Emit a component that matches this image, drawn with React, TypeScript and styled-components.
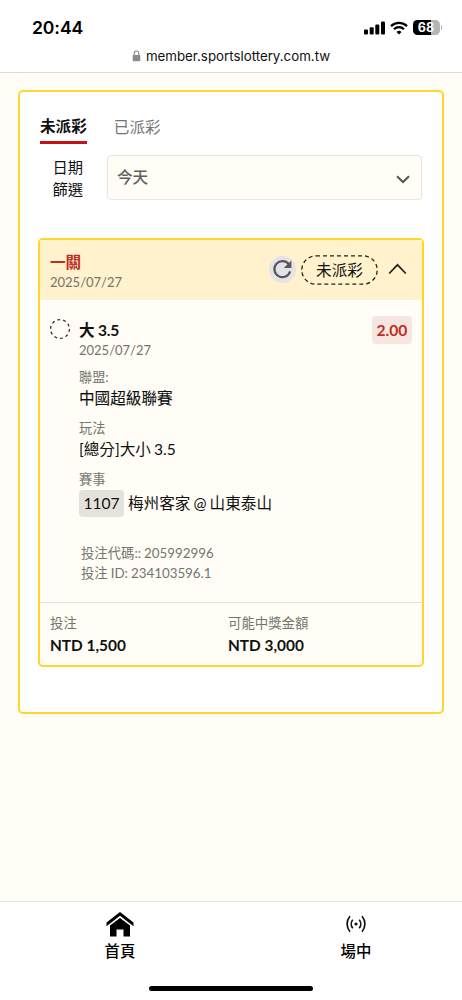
import React from "react";
import styled, { createGlobalStyle } from "styled-components";

const GlobalStyle = createGlobalStyle`
  * { box-sizing: border-box; }
  body {
    margin: 0;
    background: #fffdf6;
    color: #111;
    font-family: Lato, "Noto Sans CJK TC", sans-serif;
  }
`;

const Page = styled.div`
  display: flex;
  flex-direction: column;
  height: 1000px;
  width: 462px;
  overflow: hidden;
`;

const BrowserBar = styled.header`
  display: flex;
  flex-direction: column;
  height: 73px;
  background: #fff;
  border-bottom: 1px solid #dadadc;
  font-family: Inter, sans-serif;
`;

const StatusRow = styled.div`
  display: flex;
  justify-content: space-between;
  align-items: center;
  height: 27px;
  margin-top: 14px;
  padding: 0 20px 0 32px;
`;

const Clock = styled.span`
  font-size: 17.6px;
  font-weight: 600;
  line-height: 26px;
  letter-spacing: -0.1px;
  color: #000;
`;

const StatusIcons = styled.div`
  display: flex;
  align-items: center;
  gap: 5px;
`;

const Battery = styled.div`
  display: flex;
  align-items: center;
  gap: 1px;
`;

const BatteryLevel = styled.span`
  width: 27px;
  height: 15px;
  border-radius: 4.5px;
  background: linear-gradient(90deg, #000 68%, #b5b5b5 68%);
  color: #fff;
  font-size: 12.5px;
  font-weight: 700;
  line-height: 15px;
  text-align: center;
`;

const BatteryTip = styled.span`
  width: 1.5px;
  height: 5px;
  border-radius: 0 2px 2px 0;
  background: #b5b5b5;
`;

const AddressRow = styled.div`
  display: flex;
  justify-content: center;
  align-items: center;
  gap: 5px;
  height: 30px;
  font-size: 13.3px;
  color: #111;
`;

const Main = styled.main`
  flex: 1;
  padding: 17px 18px 0;
`;

const Panel = styled.section`
  height: 624px;
  padding: 20px 18px 0;
  border: 2px solid #ffd62c;
  border-radius: 5px;
  background: #fff;
`;

const Tabs = styled.nav`
  display: flex;
  gap: 27px;
  height: 33px;
  padding-left: 2px;
`;

const Tab = styled.span<{ $active?: boolean }>`
  height: 32px;
  border-bottom: 3px solid ${(p) => (p.$active ? "#c11318" : "transparent")};
  font-size: 15.6px;
  font-weight: ${(p) => (p.$active ? 700 : 400)};
  line-height: ${(p) => (p.$active ? 28 : 31)}px;
  color: ${(p) => (p.$active ? "#111" : "#757575")};
`;

const FilterRow = styled.div`
  display: flex;
  height: 45px;
  margin-top: 10px;
  padding-right: 2px;
`;

const FilterLabel = styled.div`
  width: 45px;
  padding-top: 1px;
  margin-right: 24px;
  font-size: 15.3px;
  line-height: 22px;
  text-align: right;
`;

const Select = styled.div`
  display: flex;
  flex: 1;
  justify-content: space-between;
  align-items: center;
  padding: 1px 10px 0 9px;
  border: 1px solid #e8e5df;
  border-radius: 4px;
  background: #fffdf6;
  font-size: 15.6px;
  font-weight: 500;
  line-height: 22px;
  color: #606060;
  svg { margin-top: 1px; }
`;

const SelectText = styled.span`
  margin-top: -2px;
`;

const Ticket = styled.article`
  height: 429px;
  margin-top: 38px;
  border: 2px solid #ffd62c;
  border-radius: 5px;
  background: #fffdf6;
`;

const TicketHead = styled.div`
  display: flex;
  align-items: center;
  height: 60px;
  padding: 0 15px 0 10px;
  background: #fff2cc;
`;

const HeadInfo = styled.div`
  display: flex;
  flex: 1;
  flex-direction: column;
  padding-top: 3px;
`;

const HeadTitle = styled.span`
  font-size: 15.6px;
  font-weight: 700;
  line-height: 20px;
  color: #bd2d24;
`;

const DateText = styled.span`
  margin-bottom: -1px;
  font-size: 13px;
  line-height: 20px;
  color: #75736b;
`;

const RefreshButton = styled.span`
  display: flex;
  align-items: center;
  justify-content: center;
  width: 27px;
  height: 27px;
  margin: 0 5px 2px 0;
  border-radius: 50%;
  background: #e4e4e6;
`;

const StatusPill = styled.span`
  position: relative;
  width: 77px;
  height: 30px;
  margin-right: 10px;
  font-size: 15.6px;
  line-height: 30px;
  text-align: center;
  svg {
    position: absolute;
    inset: 0;
  }
`;

const TicketBody = styled.div`
  display: flex;
  height: 302px;
  padding: 18px 10px 0;
`;

const Ring = styled.svg`
  width: 20px;
  height: 22px;
  margin-right: 9px;
`;

const Details = styled.div`
  display: flex;
  flex: 1;
  flex-direction: column;
`;

const PickTitle = styled.strong`
  margin-top: 2px;
  font-size: 15.6px;
  font-weight: 700;
  line-height: 20px;
  letter-spacing: -0.2px;
  color: #111;
`;

const FieldLabel = styled.span`
  margin-top: 8px;
  font-size: 13.2px;
  line-height: 20px;
  color: #75756f;
`;

const FieldValue = styled.span<{ $strong?: boolean }>`
  display: flex;
  align-items: center;
  gap: 4px;
  height: 24px;
  margin-top: -1px;
  font-size: 15.6px;
  -webkit-text-stroke: ${(p) => (p.$strong ? "0.1px #111" : "0")};
  line-height: 24px;
  word-spacing: -0.9px;
  white-space: pre;
`;

const EventRow = styled(FieldValue)`
  margin-top: 2px;
`;

const EventCode = styled.span`
  width: 45px;
  height: 27px;
  border-radius: 4px;
  background: #e5e2dc;
  font-size: 15.6px;
  line-height: 27px;
  text-align: center;
`;

const Codes = styled.div`
  margin: 28px 0 0 2px;
  font-size: 13.35px;
  line-height: 20px;
  word-spacing: -0.4px;
  color: #75756f;
`;

const Odds = styled.span`
  width: 40px;
  height: 28px;
  margin-top: -2px;
  border-radius: 4px;
  background: #f7e6df;
  font-size: 15.6px;
  font-weight: 700;
  line-height: 28px;
  text-align: center;
  color: #bd2d24;
`;

const Totals = styled.footer`
  display: grid;
  grid-template-columns: 178px 1fr;
  height: 63px;
  padding: 10px 10px 0;
  border-top: 1px solid #e3e0db;
`;

const Total = styled.div`
  display: flex;
  flex-direction: column;
`;

const TotalLabel = styled.span`
  font-size: 13.4px;
  line-height: 21px;
  color: #75756f;
`;

const Amount = styled.strong`
  font-size: 15.4px;
  font-weight: 700;
  line-height: 23px;
`;

const BottomBar = styled.nav`
  position: relative;
  display: grid;
  grid-template-columns: 236px 236px;
  height: 99px;
  padding: 9px 0 0 2px;
  border-top: 1px solid #e3e3e3;
  background: #fff;
`;

const NavItem = styled.div`
  display: flex;
  flex-direction: column;
  align-items: center;
  svg { display: block; }
`;

const NavLabel = styled.span`
  margin-top: 2px;
  font-size: 15.4px;
  font-weight: 500;
  line-height: 24px;
  color: #000;
`;

const HomeIndicator = styled.i`
  position: absolute;
  bottom: 9px;
  left: 149px;
  width: 164px;
  height: 5px;
  border-radius: 3px;
  background: #000;
`;

export default function App() {
  return (
    <Page>
      <GlobalStyle />
      <BrowserBar>
        <StatusRow>
          <Clock>20:44</Clock>
          <StatusIcons>
            <svg width="21" height="14" viewBox="0 0 21 14">
              <rect x="0" y="8.5" width="4" height="5" rx="1.1" />
              <rect x="5.7" y="6.2" width="4" height="7.3" rx="1.1" />
              <rect x="11.3" y="3.5" width="4" height="10" rx="1.1" />
              <rect x="17" y="0.5" width="4" height="13" rx="1.1" />
            </svg>
            <svg width="18" height="14" viewBox="0 0 18 14" fill="none" stroke="#000" strokeWidth="2.3">
              <path d="M1 5.1a11.4 11.4 0 0 1 16 0" />
              <path d="M4 8.2a7.1 7.1 0 0 1 10 0" />
              <path d="M9 13.5 6.5 10.9a3.6 3.6 0 0 1 5 0z" fill="#000" stroke="none" />
            </svg>
            <Battery>
              <BatteryLevel>68</BatteryLevel>
              <BatteryTip />
            </Battery>
          </StatusIcons>
        </StatusRow>
        <AddressRow>
          <svg width="9" height="12" viewBox="0 0 9 12">
            <rect x="0.7" y="5" width="7.6" height="6.3" rx="1.1" fill="#8a8a8e" />
            <path d="M2.2 5.4V3.5a2.3 2.5 0 0 1 4.6 0v1.9" fill="none" stroke="#8a8a8e" strokeWidth="1.1" />
          </svg>
          <span>member.sportslottery.com.tw</span>
        </AddressRow>
      </BrowserBar>

      <Main>
        <Panel>
          <Tabs>
            <Tab $active>未派彩</Tab>
            <Tab>已派彩</Tab>
          </Tabs>
          <FilterRow>
            <FilterLabel>
              日期
              <br />
              篩選
            </FilterLabel>
            <Select>
              <SelectText>今天</SelectText>
              <svg width="16" height="16" viewBox="0 0 16 16" fill="none" stroke="#555" strokeWidth="2">
                <path d="M2 5.3 8 11l6-5.7" />
              </svg>
            </Select>
          </FilterRow>

          <Ticket>
            <TicketHead>
              <HeadInfo>
                <HeadTitle>一關</HeadTitle>
                <DateText>2025/07/27</DateText>
              </HeadInfo>
              <RefreshButton>
                <svg width="21" height="21" viewBox="0 0 21 21">
                  <path d="M17 5.6A8 8 0 1 0 18.1 12.4" fill="none" stroke="#58585a" strokeWidth="2.2" />
                  <path d="M19.4 1.5v7.6h-7.6z" fill="#58585a" />
                </svg>
              </RefreshButton>
              <StatusPill>
                <svg width="77" height="30" viewBox="0 0 77 30" fill="none">
                  <rect x="0.8" y="0.8" width="75.4" height="28.4" rx="14.2" stroke="#222" strokeWidth="1.3" strokeDasharray="4 3" />
                </svg>
                未派彩
              </StatusPill>
              <svg width="19" height="16" viewBox="0 0 19 16" fill="none" stroke="#222" strokeWidth="1.7">
                <path d="M1.2 11.5 9.5 2.8l8.3 8.7" />
              </svg>
            </TicketHead>

            <TicketBody>
              <Ring viewBox="0 0 20 22" fill="none">
                <circle cx="10" cy="11" r="9.4" stroke="#222" strokeWidth="1.2" strokeDasharray="2.9 3" />
              </Ring>
              <Details>
                <PickTitle>大 3.5</PickTitle>
                <DateText>2025/07/27</DateText>
                <FieldLabel>聯盟:</FieldLabel>
                <FieldValue $strong>中國超級聯賽</FieldValue>
                <FieldLabel>玩法</FieldLabel>
                <FieldValue>[總分]大小 3.5</FieldValue>
                <FieldLabel>賽事</FieldLabel>
                <EventRow>
                  <EventCode>1107</EventCode>
                  梅州客家 @ 山東泰山
                </EventRow>
                <Codes>
                  投注代碼:: 205992996
                  <br />
                  投注 ID: 234103596.1
                </Codes>
              </Details>
              <Odds>2.00</Odds>
            </TicketBody>

            <Totals>
              <Total>
                <TotalLabel>投注</TotalLabel>
                <Amount>NTD 1,500</Amount>
              </Total>
              <Total>
                <TotalLabel>可能中獎金額</TotalLabel>
                <Amount>NTD 3,000</Amount>
              </Total>
            </Totals>
          </Ticket>
        </Panel>
      </Main>

      <BottomBar>
        <NavItem>
          <svg width="28" height="26" viewBox="0 0 28 26">
            <path d="M14 1 27.5 11.5v3.8L14 4.8.5 15.3v-3.8z" />
            <path d="M14 6.9 24 14.6V25.5h-6.5v-7h-7v7H4V14.6z" />
          </svg>
          <NavLabel>首頁</NavLabel>
        </NavItem>
        <NavItem>
          <svg width="22" height="26" viewBox="0 0 22 26" fill="none" stroke="#111" strokeWidth="1.7">
            <path d="M5 5.3a11.7 11.7 0 0 0 0 15.4M17 5.3a11.7 11.7 0 0 1 0 15.4M7.8 8.8a6.4 6.4 0 0 0 0 8.4M14.2 8.8a6.4 6.4 0 0 1 0 8.4" />
            <circle cx="11" cy="13" r="1.6" fill="#111" stroke="none" />
          </svg>
          <NavLabel>場中</NavLabel>
        </NavItem>
        <HomeIndicator />
      </BottomBar>
    </Page>
  );
}
